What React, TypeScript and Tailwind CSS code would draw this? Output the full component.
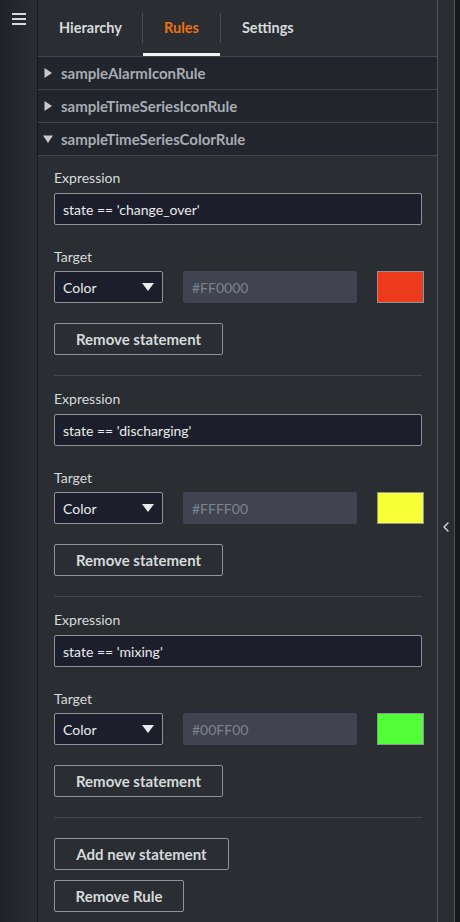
import { ChevronLeft } from 'lucide-react'

interface Statement {
  expression: string
  hex: string
  swatch: string
}

const statements: Statement[] = [
  { expression: "state == 'change_over'", hex: '#FF0000', swatch: 'bg-[#ee3a1c]' },
  { expression: "state == 'discharging'", hex: '#FFFF00', swatch: 'bg-[#f9ff36]' },
  { expression: "state == 'mixing'", hex: '#00FF00', swatch: 'bg-[#52ff38]' },
]

const rules = [
  { name: 'sampleAlarmIconRule', open: false },
  { name: 'sampleTimeSeriesIconRule', open: false },
  { name: 'sampleTimeSeriesColorRule', open: true },
]

function Triangle({ open }: { open: boolean }) {
  return (
    <svg width="10" height="10" viewBox="0 0 10 10" className="shrink-0 fill-[#c6cace]">
      {open ? <path d="M0 1.5h10L5 9z" /> : <path d="M1.5 0v10L9 5z" />}
    </svg>
  )
}

function OutlineButton({ label, width }: { label: string; width: string }) {
  return (
    <button
      className={`${width} h-[32px] border border-[#8d9599] rounded-[2px] text-[15px] font-bold text-[#d5dbdb] flex items-center justify-center`}
    >
      {label}
    </button>
  )
}

function StatementBlock({ s }: { s: Statement }) {
  return (
    <div className="flex flex-col">
      <div className="text-[14px] text-[#d5dbdb] leading-[20px] mb-[5px]">Expression</div>
      <div className="w-[368px] h-[32px] bg-[#1c1f2b] border border-[#8d9599] rounded-[2px] flex items-center px-[8px] text-[14px] text-[#e9ebed]">
        {s.expression}
      </div>
      <div className="text-[14px] text-[#d5dbdb] leading-[20px] mt-[22px] mb-[4px]">Target</div>
      <div className="flex items-center">
        <div className="w-[109px] h-[32px] bg-[#1c1f2b] border border-[#8d9599] rounded-[2px] flex items-center justify-between pl-[8px] pr-[8px] text-[14px] text-[#e9ebed]">
          <span>Color</span>
          <svg width="12" height="10" viewBox="0 0 12 10" className="fill-[#e9ebed]">
            <path d="M0 1h12L6 9z" />
          </svg>
        </div>
        <div className="ml-[20px] w-[174px] h-[32px] bg-[#414350] rounded-[2px] flex items-center px-[9px] text-[14px] text-[#7d8490]">
          {s.hex}
        </div>
        <div className={`ml-[20px] w-[47px] h-[32px] border border-[#8d9599] ${s.swatch}`} />
      </div>
      <div className="mt-[20px]">
        <OutlineButton label="Remove statement" width="w-[169px]" />
      </div>
      <div className="h-px bg-[#42464d] w-[368px] mt-[20px] mb-[13px]" />
    </div>
  )
}

export default function App() {
  return (
    <div
      className="w-[460px] h-[922px] flex bg-[#2a2d32] overflow-hidden"
      style={{ fontFamily: 'Lato, "Noto Sans", sans-serif' }}
    >
      {/* left rail */}
      <div className="w-[38px] shrink-0 bg-gradient-to-r from-[#1f2226] to-[#2a2d32] border-r border-[#16181b] flex justify-center pt-[13px]">
        <div className="flex flex-col gap-[3px]">
          <div className="w-[14px] h-[2px] bg-[#d5dbdb]" />
          <div className="w-[14px] h-[2px] bg-[#d5dbdb]" />
          <div className="w-[14px] h-[2px] bg-[#d5dbdb]" />
        </div>
      </div>

      {/* main panel */}
      <div className="w-[400px] shrink-0 border-r border-[#4f545b] flex flex-col">
        <div className="h-[57px] flex items-stretch border-b border-[#42464d]">
          <div className="pl-[21px] pr-[20px] flex items-center text-[14.5px] font-bold text-[#d5dbdb]">Hierarchy</div>
          <div className="w-px bg-[#4a4e55] my-[13px]" />
          <div className="px-[21px] flex items-center relative text-[14.5px] font-bold text-[#ec7211]">
            Rules
            <div className="absolute left-0 right-0 bottom-0 h-[3px] bg-[#f2f3f3]" />
          </div>
          <div className="w-px bg-[#4a4e55] my-[13px]" />
          <div className="px-[21px] flex items-center text-[14.5px] font-bold text-[#d5dbdb]">Settings</div>
        </div>

        {rules.map((r) => (
          <div
            key={r.name}
            className="h-[33px] bg-[#22252c] border-b border-[#42464d] flex items-center gap-[8px] pl-[5px] text-[15px] font-bold text-[#a7adb3]"
          >
            <Triangle open={r.open} />
            <span>{r.name}</span>
          </div>
        ))}

        <div className="flex flex-col pl-[16px] pt-[12px]">
          {statements.map((s, i) => (
            <StatementBlock key={i} s={s} />
          ))}
          <div className="mt-[7px]">
            <OutlineButton label="Add new statement" width="w-[175px]" />
          </div>
          <div className="mt-[10px]">
            <OutlineButton label="Remove Rule" width="w-[130px]" />
          </div>
        </div>
      </div>

      {/* right strip */}
      <div className="w-[17px] shrink-0 border-r border-[#4f545b] flex items-center justify-center">
        <ChevronLeft size={18} strokeWidth={2} className="text-[#d5dbdb] mt-[132px]" />
      </div>
      <div className="flex-1 bg-[#16181b]" />
    </div>
  )
}
